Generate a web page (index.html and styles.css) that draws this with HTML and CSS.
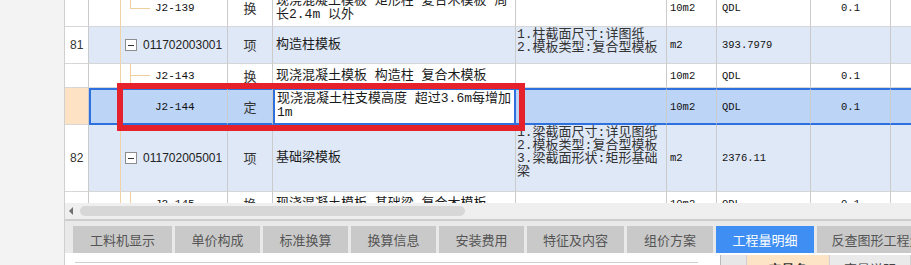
FILE: index.html
```html
<!DOCTYPE html>
<html lang="zh">
<head>
<meta charset="utf-8">
<title>清单定额</title>
<link rel="stylesheet" href="styles.css">
</head>
<body>
<div class="app">
  <div class="side"></div>
  <div class="main">
    <div class="grid">
      <div class="rows">
        <div class="row h37">
          <div class="cell num"></div>
          <div class="cell c2"></div>
          <div class="cell code tree-last"><span class="sub">J2-139</span></div>
          <div class="cell type">换</div>
          <div class="cell name">现浇混凝土模板 矩形柱 复合木模板 周<br>长2.4m 以外</div>
          <div class="cell feat"></div>
          <div class="cell unit">10m2</div>
          <div class="cell expr">QDL</div>
          <div class="cell qty">0.1</div>
          <div class="cell"></div>
        </div>
        <div class="row h37 item">
          <div class="cell num">81</div>
          <div class="cell c2"></div>
          <div class="cell code tree-parent"><span class="box"></span><span class="bill">011702003001</span></div>
          <div class="cell type">项</div>
          <div class="cell name">构造柱模板</div>
          <div class="cell feat">1.柱截面尺寸:详图纸<br>2.模板类型:复合型模板</div>
          <div class="cell unit">m2</div>
          <div class="cell expr">393.7979</div>
          <div class="cell qty"></div>
          <div class="cell"></div>
        </div>
        <div class="row h24">
          <div class="cell num"></div>
          <div class="cell c2"></div>
          <div class="cell code tree-mid"><span class="sub">J2-143</span></div>
          <div class="cell type">换</div>
          <div class="cell name">现浇混凝土模板 构造柱 复合木模板</div>
          <div class="cell feat"></div>
          <div class="cell unit">10m2</div>
          <div class="cell expr">QDL</div>
          <div class="cell qty">0.1</div>
          <div class="cell"></div>
        </div>
        <div class="row h37 sel">
          <div class="cell num cur"></div>
          <div class="cell c2 first"></div>
          <div class="cell code tree-last faint"><span class="sub">J2-144</span></div>
          <div class="cell type">定</div>
          <div class="cell name edit">现浇混凝土柱支模高度 超过3.6m每增加<br>1m</div>
          <div class="cell feat"></div>
          <div class="cell unit">10m2</div>
          <div class="cell expr">QDL</div>
          <div class="cell qty">0.1</div>
          <div class="cell"></div>
        </div>
        <div class="row h67 item">
          <div class="cell num">82</div>
          <div class="cell c2"></div>
          <div class="cell code tree-parent"><span class="box"></span><span class="bill">011702005001</span></div>
          <div class="cell type">项</div>
          <div class="cell name">基础梁模板</div>
          <div class="cell feat">1.梁截面尺寸:详见图纸<br>2.模板类型:复合型模板<br>3.梁截面形状:矩形基础<br>梁</div>
          <div class="cell unit">m2</div>
          <div class="cell expr">2376.11</div>
          <div class="cell qty"></div>
          <div class="cell"></div>
        </div>
        <div class="row h24">
          <div class="cell num"></div>
          <div class="cell c2"></div>
          <div class="cell code tree-mid"><span class="sub">J2-145</span></div>
          <div class="cell type">换</div>
          <div class="cell name">现浇混凝土模板 基础梁 复合木模板</div>
          <div class="cell feat"></div>
          <div class="cell unit">10m2</div>
          <div class="cell expr">QDL</div>
          <div class="cell qty">0.1</div>
          <div class="cell"></div>
        </div>
      </div>
      <div class="mark"></div>
    </div>
    <div class="hscroll"><span class="arrow"></span><span class="thumb"></span></div>
    <div class="tabs">
      <div class="tab w99">工料机显示</div>
      <div class="tab">单价构成</div>
      <div class="tab">标准换算</div>
      <div class="tab">换算信息</div>
      <div class="tab">安装费用</div>
      <div class="tab w97">特征及内容</div>
      <div class="tab w86">组价方案</div>
      <div class="tab w98 active">工程量明细</div>
      <div class="tab w120">反查图形工程量</div>
    </div>
    <div class="bottom">
      <div class="bleft"><div class="inp"></div></div>
      <div class="bright">
        <div class="hc hgray"></div>
        <div class="hc hname">变量名</div>
        <div class="hc hdesc">变量说明</div>
      </div>
    </div>
  </div>
</div>
</body>
</html>
```

FILE: styles.css
```css
html, body {
  margin: 0;
  padding: 0;
}
body {
  width: 911px;
  height: 265px;
  overflow: hidden;
  background: #f3f3f3;
  font-family: "Noto Sans CJK SC", sans-serif;
  color: #1a1a1a;
}
.app {
  display: flex;
  height: 265px;
}
.side {
  flex: none;
  width: 64px;
  background: #f3f3f3;
  border-right: 1px solid #d0d0d0;
}
.main {
  flex: 1;
  min-width: 0;
  display: flex;
  flex-direction: column;
  overflow: hidden;
}
.grid {
  position: relative;
  height: 203px;
  flex: none;
  overflow: hidden;
  background: #fff;
}
.rows {
  margin-top: -10px;
}
.row {
  display: grid;
  grid-template-columns: 24px 32px 107px 45px 243px 151px 50px 94px 80px 60px;
}
.h37 { height: 37px; }
.h24 { height: 24px; }
.h67 { height: 67px; }
.cell {
  box-sizing: border-box;
  display: flex;
  align-items: center;
  overflow: hidden;
  white-space: nowrap;
  border-right: 1px solid #cbcbcb;
  border-bottom: 1px solid #d6d6d6;
  font-size: 13px;
  line-height: 14px;
}
.item .cell { background: #dfe8f7; }
.item .cell.num { background: #fff; }
.num {
  font-family: "Liberation Sans", sans-serif;
  font-size: 12px;
  padding-left: 5px;
  color: #333;
}
.c2 { border-right-color: #efd3a6; }
.code {
  padding-left: 4px;
  font-family: "Liberation Sans", sans-serif;
  font-size: 12px;
  color: #222;
  background-repeat: no-repeat;
}
.sub {
  padding-left: 30px;
  font-family: "Liberation Mono", monospace;
  font-size: 11px;
  color: #111;
}
.box {
  box-sizing: border-box;
  width: 12px;
  height: 12px;
  border: 1px solid #8d8d8d;
  background: #fff linear-gradient(#333, #333) center / 6px 1px no-repeat;
  margin-right: 6px;
  flex: none;
}
.tree-mid {
  background-image: linear-gradient(#efcf9c, #efcf9c), linear-gradient(#efcf9c, #efcf9c);
  background-position: 9px 0, 9px 50%;
  background-size: 1px 100%, 20px 1px;
}
.tree-last {
  background-image: linear-gradient(#efcf9c, #efcf9c), linear-gradient(#efcf9c, #efcf9c);
  background-position: 9px 0, 9px 50%;
  background-size: 1px 50%, 20px 1px;
}
.tree-parent {
  background-image: linear-gradient(#efcf9c, #efcf9c);
  background-position: 10px 100%;
  background-size: 1px 12px;
}
.h67 .tree-parent { background-size: 1px 26px; }
.type {
  justify-content: center;
  font-family: "Noto Sans CJK SC", sans-serif;
  color: #333;
}
.name {
  padding-left: 3px;
  font-family: "Liberation Mono", "Noto Sans CJK SC", monospace;
  font-size: 13px;
  line-height: 14px;
  white-space: nowrap;
}
.feat {
  align-items: flex-start;
  padding: 1px 0 0 1px;
  font-family: "Liberation Mono", "Noto Sans CJK SC", monospace;
  font-size: 13px;
  line-height: 13px;
  color: #333;
}
.unit {
  padding-left: 3px;
  font-family: "Liberation Mono", monospace;
  font-size: 10.5px;
  color: #111;
}
.expr {
  padding-left: 5px;
  font-family: "Liberation Mono", monospace;
  font-size: 10.5px;
  color: #111;
}
.qty {
  justify-content: center;
  font-family: "Liberation Mono", monospace;
  font-size: 10.5px;
  color: #111;
}
/* selected row */
.sel .cell {
  background: #bcd5f7;
  border-top: 2px solid #2f70df;
  border-bottom: 2px solid #2f70df;
}
.sel .cell.num.cur {
  background: #fde3c4;
  border-top: 0;
  border-bottom: 1px solid #d6d6d6;
}
.sel .cell.first { border-left: 2px solid #2f70df; }
.sel .cell.edit {
  background: #fff;
  border: 2px solid #2f70df;
  align-items: flex-start;
  padding-top: 2px;
  padding-left: 2px;
}
.faint {
  background-image: linear-gradient(#d9cfb6, #d9cfb6), linear-gradient(#d9cfb6, #d9cfb6);
}
.mark {
  position: absolute;
  left: 52px;
  top: 83px;
  width: 408px;
  height: 48px;
  box-sizing: border-box;
  border: 6px solid #e5222b;
  pointer-events: none;
}
.hscroll {
  flex: none;
  box-sizing: border-box;
  height: 18px;
  background: #efefef;
  border-bottom: 2px solid #cdcdcd;
  display: flex;
  align-items: center;
  padding-left: 4px;
}
.arrow {
  width: 0;
  height: 0;
  border-right: 4px solid #6f6f6f;
  border-top: 4px solid transparent;
  border-bottom: 4px solid transparent;
}
.thumb {
  margin-left: 7px;
  width: 385px;
  height: 10px;
  border-radius: 5px;
  background: #d7d7d7;
}
.tabs {
  flex: none;
  height: 32px;
  box-sizing: border-box;
  background: #e9e9e9;
  display: flex;
  align-items: flex-end;
  gap: 3px;
  padding-left: 8px;
  white-space: nowrap;
  overflow: hidden;
}
.tab {
  flex: none;
  width: 85px;
  height: 27px;
  line-height: 27px;
  text-align: center;
  background: #c9c9c9;
  color: #555;
  font-size: 13px;
}
.w99 { width: 99px; }
.w97 { width: 97px; }
.w86 { width: 86px; }
.w98 { width: 98px; }
.w120 { width: 120px; }
.tab.active {
  background: #3e8ef3;
  color: #fff;
}
.bottom {
  flex: 1;
  display: flex;
  background: #fff;
  overflow: hidden;
}
.bleft {
  flex: none;
  width: 655px;
  padding: 9px 0 0 10px;
  box-sizing: border-box;
}
.inp {
  width: 623px;
  border-top: 1px solid #cfcfcf;
}
.bright {
  flex: 1;
  display: flex;
  border-left: 1px solid #b9b9b9;
  margin-top: 2px;
}
.hc {
  box-sizing: border-box;
  height: 24px;
  font-size: 13px;
  line-height: 22px;
  padding-top: 3px;
  text-align: center;
  border-right: 1px solid #d0d0d0;
  white-space: nowrap;
}
.hgray { width: 26px; background: #e7e7e7; }
.hname { width: 83px; background: #fde4c6; font-weight: bold; color: #333; }
.hdesc { flex: 1; background: #eaeaea; color: #444; }
```
